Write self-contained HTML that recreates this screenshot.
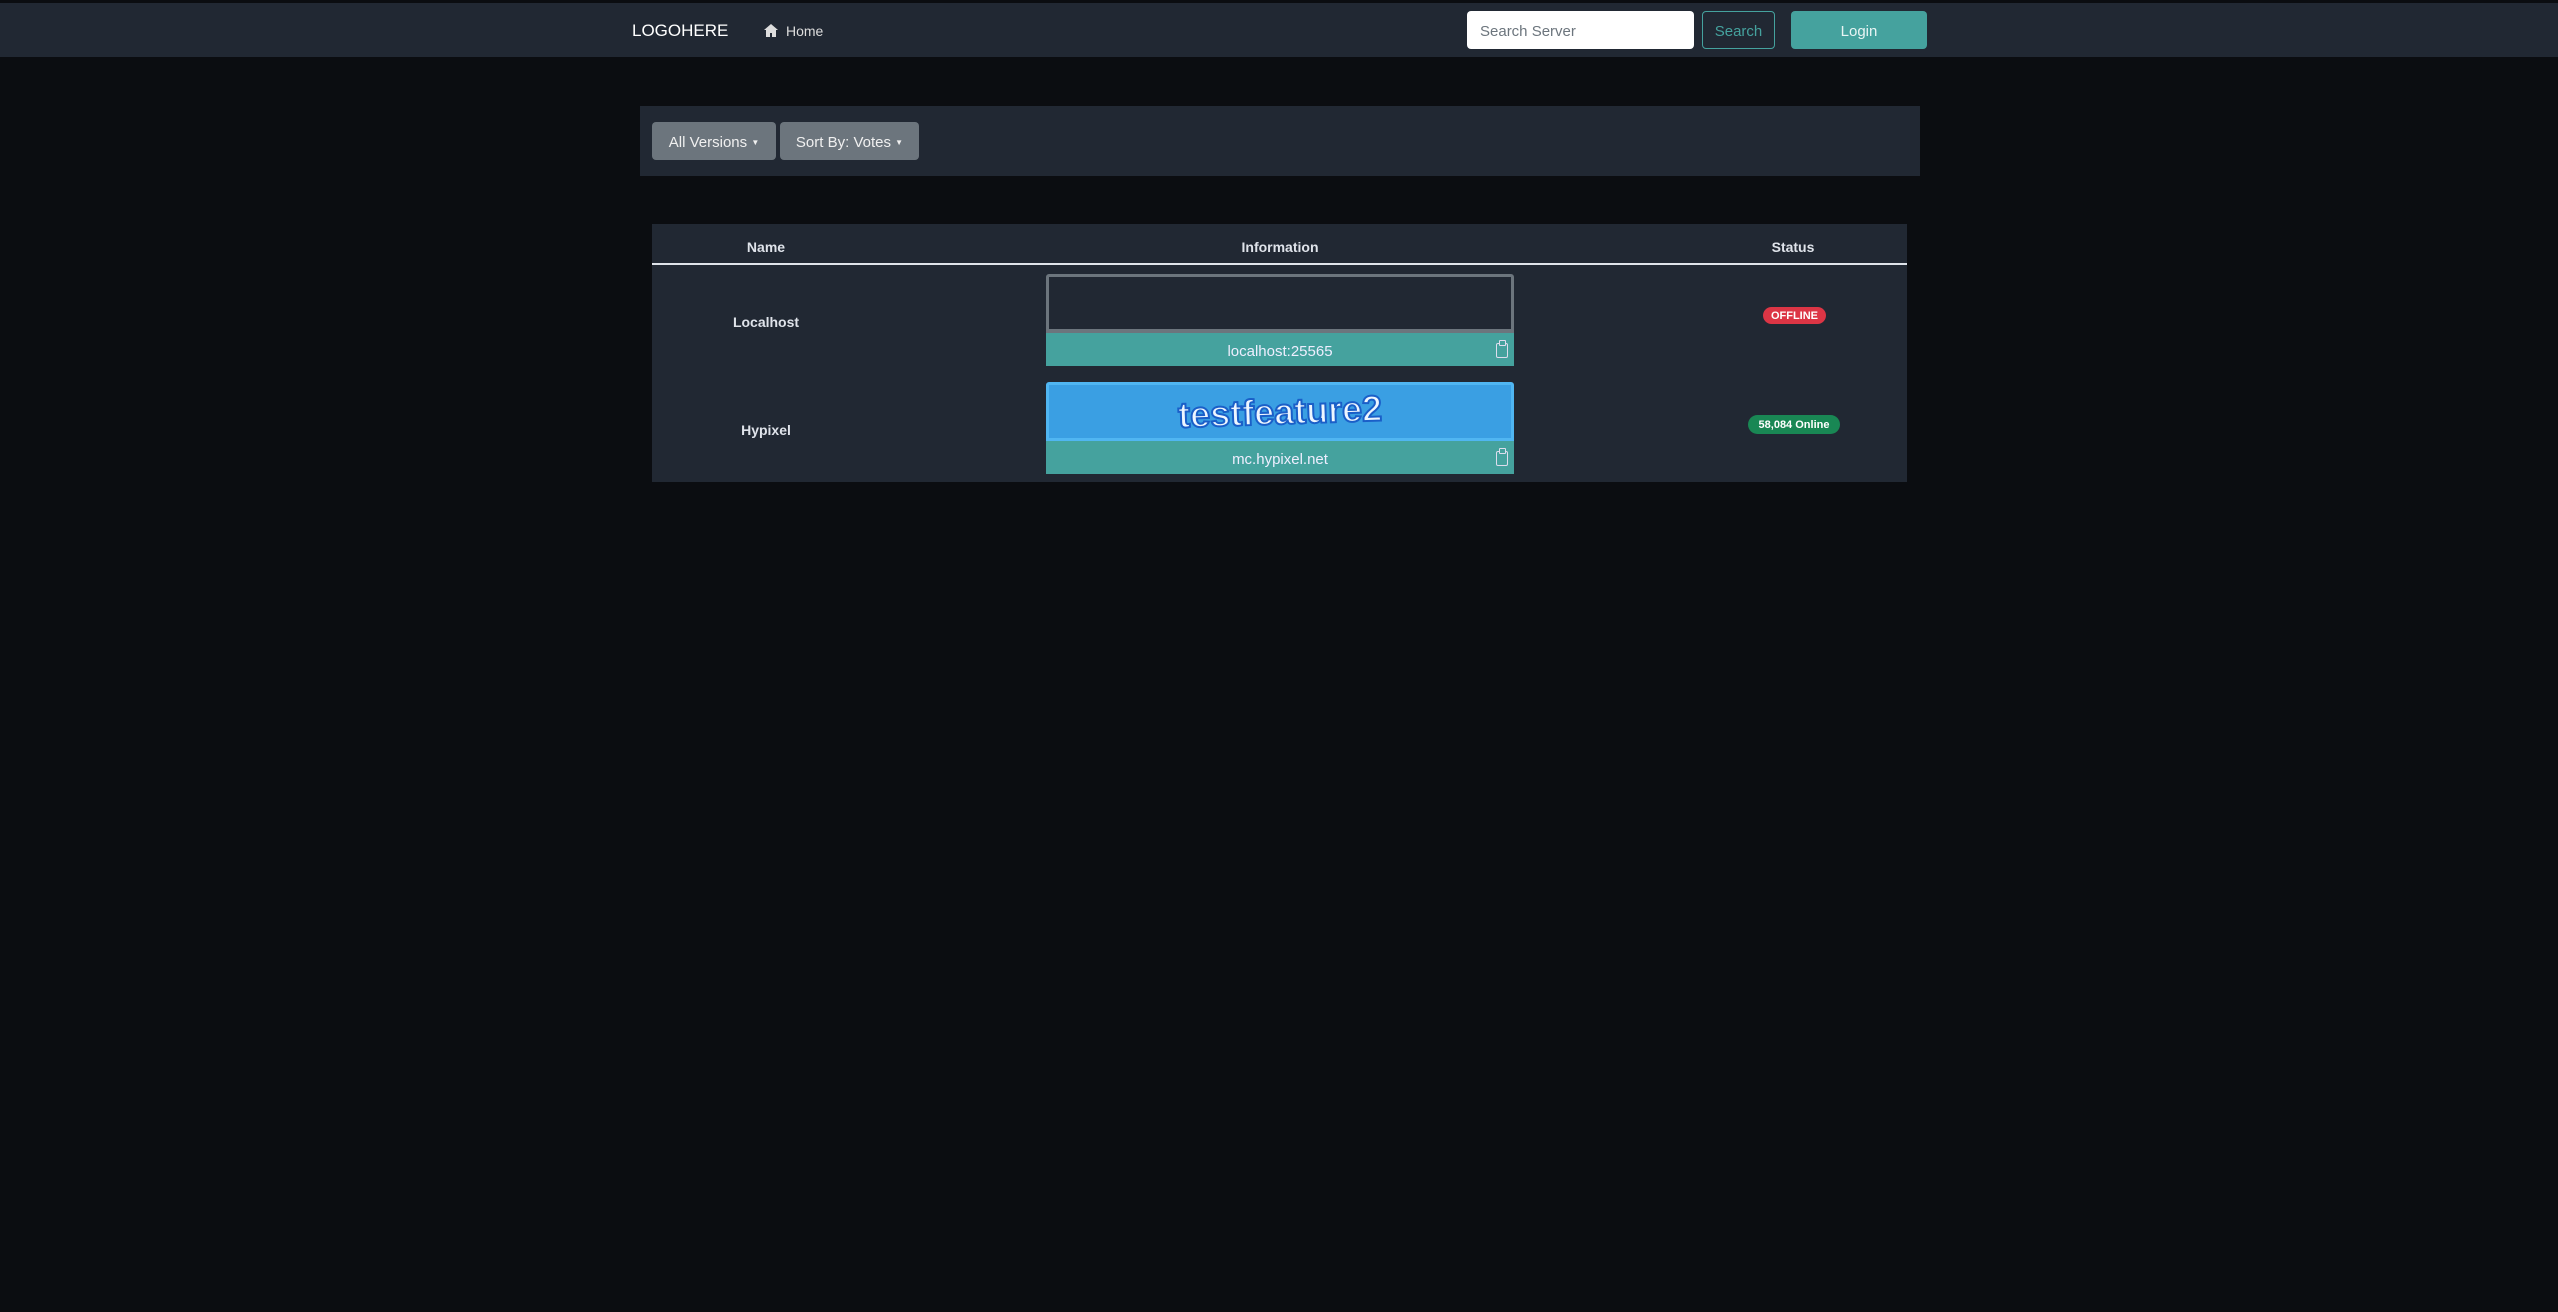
<!DOCTYPE html>
<html><head><meta charset="utf-8"><style>
*{box-sizing:border-box;margin:0;padding:0}
body{width:2558px;height:1312px;background:#0b0d11;font-family:"Liberation Sans",sans-serif;position:relative;overflow:hidden;color:#fff}
.abs{position:absolute}
.nav{left:0;top:0;width:2558px;height:57px;background:#212833;border-top:3px solid #0b0d11}
.btn{position:absolute;display:flex;align-items:center;justify-content:center;border-radius:4px;font-size:15px;padding-top:3px}
.th{position:absolute;top:239px;font-size:14px;font-weight:bold;color:#dfe3ea;transform:translateX(-50%)}
.name{position:absolute;font-size:14px;font-weight:bold;color:#dfe3ea;transform:translateX(-50%)}
.teal{position:absolute;left:1046px;width:468px;background:#45a29e;color:#eef;font-size:15px;display:flex;align-items:center;justify-content:center;padding-top:3px}
.clip{position:absolute;right:6px;top:10px;width:12px;height:15px;border:1.5px solid #dde;border-radius:2px}
.clip:before{content:"";position:absolute;left:2px;top:-4px;width:5px;height:4px;border:1.5px solid #dde;border-radius:1px;background:#45a29e}
.badge{position:absolute;border-radius:10px;font-size:11px;font-weight:bold;display:flex;align-items:center;justify-content:center;color:#fff}
</style></head><body>
<div class="abs nav"></div>
<div class="abs" style="left:632px;top:21px;font-size:17px;color:#fff">LOGOHERE</div>
<svg class="abs" style="left:764px;top:24px" width="14" height="13" viewBox="0 0 14 13"><path d="M7 0L0 6h2v7h4V9h2v4h4V6h2z" fill="#ddd"/></svg>
<div class="abs" style="left:786px;top:23px;font-size:14px;color:#ddd">Home</div>
<div class="abs" style="left:1467px;top:11px;width:227px;height:38px;background:#fff;border-radius:4px;color:#6c757d;font-size:15px;padding:12px 13px 0">Search Server</div>
<div class="btn" style="left:1702px;top:11px;width:73px;height:38px;border:1px solid #45a29e;color:#45a29e">Search</div>
<div class="btn" style="left:1791px;top:11px;width:136px;height:38px;background:#45a29e;color:#e8f4f4">Login</div>
<div class="abs" style="left:640px;top:106px;width:1280px;height:70px;background:#212833"></div>
<div class="btn" style="left:652px;top:122px;width:124px;height:38px;background:#6c757d;color:#f0f0f0">All Versions&nbsp;<span style="font-size:8px">▼</span></div>
<div class="btn" style="left:780px;top:122px;width:139px;height:38px;background:#6c757d;color:#f0f0f0">Sort By: Votes&nbsp;<span style="font-size:8px">▼</span></div>
<div class="abs" style="left:652px;top:224px;width:1255px;height:258px;background:#212833"></div>
<div class="abs" style="left:652px;top:263px;width:1255px;height:2px;background:#dfe3ea"></div>
<div class="th" style="left:766px">Name</div>
<div class="th" style="left:1280px">Information</div>
<div class="th" style="left:1793px">Status</div>
<div class="name" style="left:766px;top:314px">Localhost</div>
<div class="name" style="left:766px;top:422px">Hypixel</div>
<div class="abs" style="left:1046px;top:274px;width:468px;height:59px;border:3px solid #6c757d;border-bottom-width:4px;background:#212833;border-radius:3px 3px 0 0"></div>
<div class="teal" style="top:333px;height:33px">localhost:25565<div class="clip"></div></div>
<div class="abs" style="left:1046px;top:382px;width:468px;height:59px;background:#3a9fe3;border:3px solid #50b6f2;border-radius:3px 3px 0 0;display:flex;align-items:center;justify-content:center"><span style="font-size:36px;font-weight:bold;color:#eef6ff;-webkit-text-stroke:2px #1a5fc8;transform:rotate(-2deg);display:inline-block">testfeature2</span></div>
<div class="teal" style="top:441px;height:33px">mc.hypixel.net<div class="clip"></div></div>
<div class="badge" style="left:1763px;top:307px;width:63px;height:17px;background:#dc3545">OFFLINE</div>
<div class="badge" style="left:1748px;top:415px;width:92px;height:19px;background:#198754">58,084 Online</div>
</body></html>
